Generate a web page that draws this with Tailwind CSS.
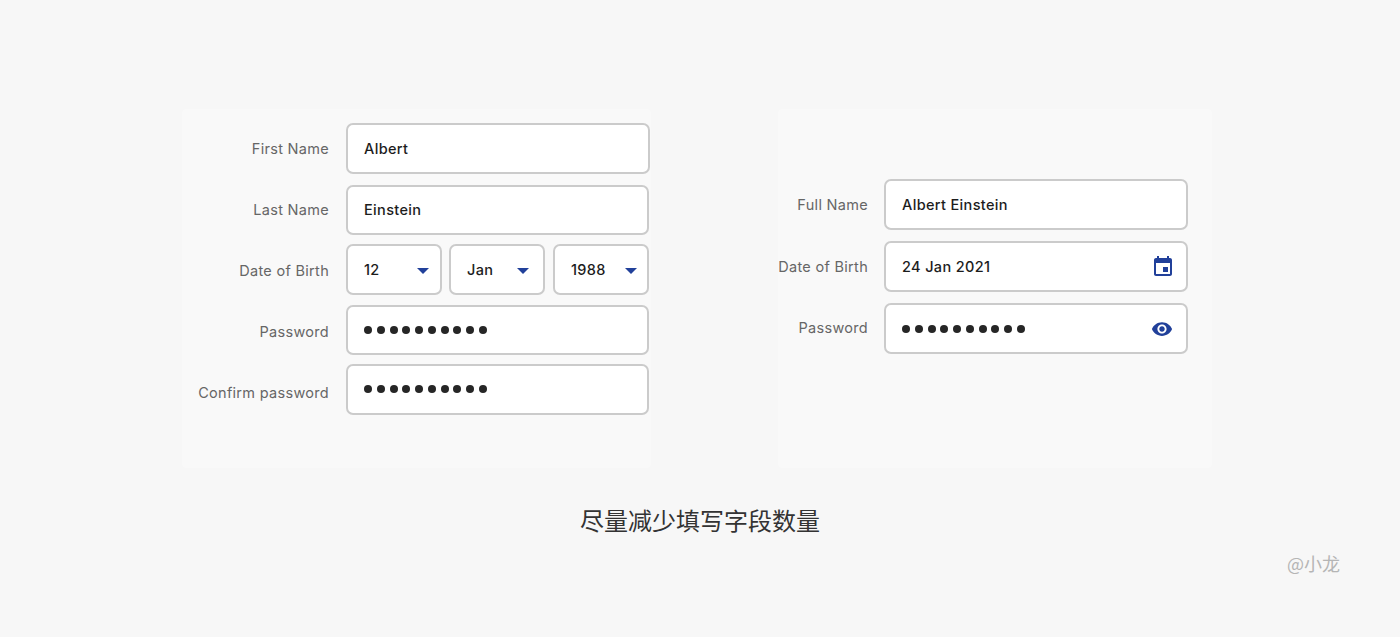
<!DOCTYPE html>
<html lang="zh">
<head>
  <meta charset="UTF-8" />
  <title>尽量减少填写字段数量</title>
  <script src="https://cdn.jsdelivr.net/npm/@tailwindcss/browser@4"></script>
</head>
<body class="bg-[#f7f7f7] w-[1400px] h-[637px] overflow-hidden font-['Inter','Noto_Sans_CJK_SC',sans-serif]">
  <div class="pt-[109px] pl-[182px] flex">

    <!-- long form -->
    <div class="w-[469px] h-[359px] bg-[#f9f9f9] rounded pt-[14px] pr-[1px] flex flex-col">
      <div class="flex items-center h-[51px]">
        <div class="w-[147px] text-right text-[14.5px] tracking-[0.3px] text-[#666]">First Name</div>
        <div class="ml-[17px] w-[304px] h-[51px] bg-white border-2 border-[#cbcbcb] rounded-[7px] pl-[16px] flex items-center text-[14.5px] tracking-[0.35px] font-medium text-[#1c1c1c]">Albert</div>
      </div>
      <div class="flex items-center h-[50px] mt-[11px]">
        <div class="w-[147px] text-right text-[14.5px] tracking-[0.3px] text-[#666]">Last Name</div>
        <div class="ml-[17px] w-[303px] h-[50px] bg-white border-2 border-[#cbcbcb] rounded-[7px] pl-[16px] flex items-center text-[14.5px] tracking-[0.35px] font-medium text-[#1c1c1c]">Einstein</div>
      </div>
      <div class="flex items-center h-[51px] mt-[9px]">
        <div class="w-[147px] text-right text-[14.5px] tracking-[0.3px] text-[#666] pt-[3px]">Date of Birth</div>
        <div class="ml-[17px] w-[303px] flex">
          <div class="w-[96px] h-[51px] bg-white border-2 border-[#cbcbcb] rounded-[7px] pl-[16px] pr-[11px] flex items-center justify-between text-[14.5px] tracking-[0.35px] font-medium text-[#1c1c1c]">12
            <svg class="mt-[2px]" width="12" height="6" viewBox="0 0 12 6"><path d="M0 0h12L6 6z" fill="#21409a"/></svg>
          </div>
          <div class="ml-[7px] w-[96px] h-[51px] bg-white border-2 border-[#cbcbcb] rounded-[7px] pl-[16px] pr-[14px] flex items-center justify-between text-[14.5px] tracking-[0.35px] font-medium text-[#1c1c1c]">Jan
            <svg class="mt-[2px]" width="12" height="6" viewBox="0 0 12 6"><path d="M0 0h12L6 6z" fill="#21409a"/></svg>
          </div>
          <div class="ml-[8px] w-[96px] h-[51px] bg-white border-2 border-[#cbcbcb] rounded-[7px] pl-[16px] pr-[10px] flex items-center justify-between text-[14.5px] tracking-[0.35px] font-medium text-[#1c1c1c]">1988
            <svg class="mt-[2px]" width="12" height="6" viewBox="0 0 12 6"><path d="M0 0h12L6 6z" fill="#21409a"/></svg>
          </div>
        </div>
      </div>
      <div class="flex items-center h-[50px] mt-[10px]">
        <div class="w-[147px] text-right text-[14.5px] tracking-[0.3px] text-[#666] pt-[4px]">Password</div>
        <div class="ml-[17px] w-[303px] h-[50px] bg-white border-2 border-[#cbcbcb] rounded-[7px] pl-[16px] flex items-center gap-[4.75px]">
          <span class="size-2 rounded-full bg-[#262626]"></span><span class="size-2 rounded-full bg-[#262626]"></span><span class="size-2 rounded-full bg-[#262626]"></span><span class="size-2 rounded-full bg-[#262626]"></span><span class="size-2 rounded-full bg-[#262626]"></span><span class="size-2 rounded-full bg-[#262626]"></span><span class="size-2 rounded-full bg-[#262626]"></span><span class="size-2 rounded-full bg-[#262626]"></span><span class="size-2 rounded-full bg-[#262626]"></span><span class="size-2 rounded-full bg-[#262626]"></span>
        </div>
      </div>
      <div class="flex items-center h-[51px] mt-[9px]">
        <div class="w-[147px] text-right text-[14.5px] tracking-[0.3px] text-[#666] pt-[7px]">Confirm password</div>
        <div class="ml-[17px] w-[303px] h-[51px] bg-white border-2 border-[#cbcbcb] rounded-[7px] pl-[16px] flex items-center gap-[4.75px] pb-[1px]">
          <span class="size-2 rounded-full bg-[#262626]"></span><span class="size-2 rounded-full bg-[#262626]"></span><span class="size-2 rounded-full bg-[#262626]"></span><span class="size-2 rounded-full bg-[#262626]"></span><span class="size-2 rounded-full bg-[#262626]"></span><span class="size-2 rounded-full bg-[#262626]"></span><span class="size-2 rounded-full bg-[#262626]"></span><span class="size-2 rounded-full bg-[#262626]"></span><span class="size-2 rounded-full bg-[#262626]"></span><span class="size-2 rounded-full bg-[#262626]"></span>
        </div>
      </div>
    </div>

    <!-- short form -->
    <div class="ml-[127px] w-[434px] h-[359px] bg-[#f9f9f9] rounded pt-[70px] flex flex-col">
      <div class="flex items-center h-[51px]">
        <div class="w-[90px] text-right text-[14.5px] tracking-[0.3px] text-[#666] whitespace-nowrap pt-[1px]">Full Name</div>
        <div class="ml-[16px] w-[304px] h-[51px] bg-white border-2 border-[#cbcbcb] rounded-[7px] pl-[16px] flex items-center text-[14.5px] tracking-[0.35px] font-medium text-[#1c1c1c]">Albert Einstein</div>
      </div>
      <div class="flex items-center h-[51px] mt-[11px]">
        <div class="w-[90px] flex justify-end text-[14.5px] tracking-[0.3px] text-[#666] whitespace-nowrap overflow-hidden">Date of Birth</div>
        <div class="ml-[16px] w-[304px] h-[51px] bg-white border-2 border-[#cbcbcb] rounded-[7px] pl-[16px] pr-[11px] flex items-center justify-between text-[14.5px] tracking-[0.35px] font-medium text-[#1c1c1c]">24 Jan 2021
          <svg class="mt-[1px]" width="24" height="24" viewBox="0 0 24 24" fill="#21409a"><path d="M17 12h-5v5h5v-5zM16 1v2H8V1H6v2H5c-1.11 0-1.99.9-1.99 2L3 19c0 1.1.89 2 2 2h14c1.1 0 2-.9 2-2V5c0-1.1-.9-2-2-2h-1V1h-2zm3 18H5V8h14v11z"/></svg>
        </div>
      </div>
      <div class="flex items-center h-[51px] mt-[11px]">
        <div class="w-[90px] text-right text-[14.5px] tracking-[0.3px] text-[#666] whitespace-nowrap pb-[2px]">Password</div>
        <div class="ml-[16px] w-[304px] h-[51px] bg-white border-2 border-[#cbcbcb] rounded-[7px] pl-[16px] pr-[13px] flex items-center justify-between">
          <div class="flex items-center gap-[4.75px]">
            <span class="size-2 rounded-full bg-[#262626]"></span><span class="size-2 rounded-full bg-[#262626]"></span><span class="size-2 rounded-full bg-[#262626]"></span><span class="size-2 rounded-full bg-[#262626]"></span><span class="size-2 rounded-full bg-[#262626]"></span><span class="size-2 rounded-full bg-[#262626]"></span><span class="size-2 rounded-full bg-[#262626]"></span><span class="size-2 rounded-full bg-[#262626]"></span><span class="size-2 rounded-full bg-[#262626]"></span><span class="size-2 rounded-full bg-[#262626]"></span>
          </div>
          <svg width="22" height="22" viewBox="0 0 24 24" fill="#21409a"><path d="M12 4.5C7 4.5 2.73 7.61 1 12c1.73 4.39 6 7.5 11 7.5s9.27-3.11 11-7.5c-1.73-4.39-6-7.5-11-7.5zM12 17c-2.76 0-5-2.24-5-5s2.24-5 5-5 5 2.24 5 5-2.24 5-5 5zm0-8c-1.66 0-3 1.34-3 3s1.34 3 3 3 3-1.34 3-3-1.34-3-3-3z"/></svg>
        </div>
      </div>
    </div>
  </div>

  <div class="mt-[34px] text-center text-[24px] leading-[36px] text-[#333] font-['Noto_Sans_CJK_SC',sans-serif]">尽量减少填写字段数量</div>
  <div class="mt-[12px] pr-[60px] text-right text-[18px] leading-[26px] text-[#b5b5b5] font-['Noto_Sans_CJK_SC',sans-serif]">@小龙</div>
</body>
</html>
